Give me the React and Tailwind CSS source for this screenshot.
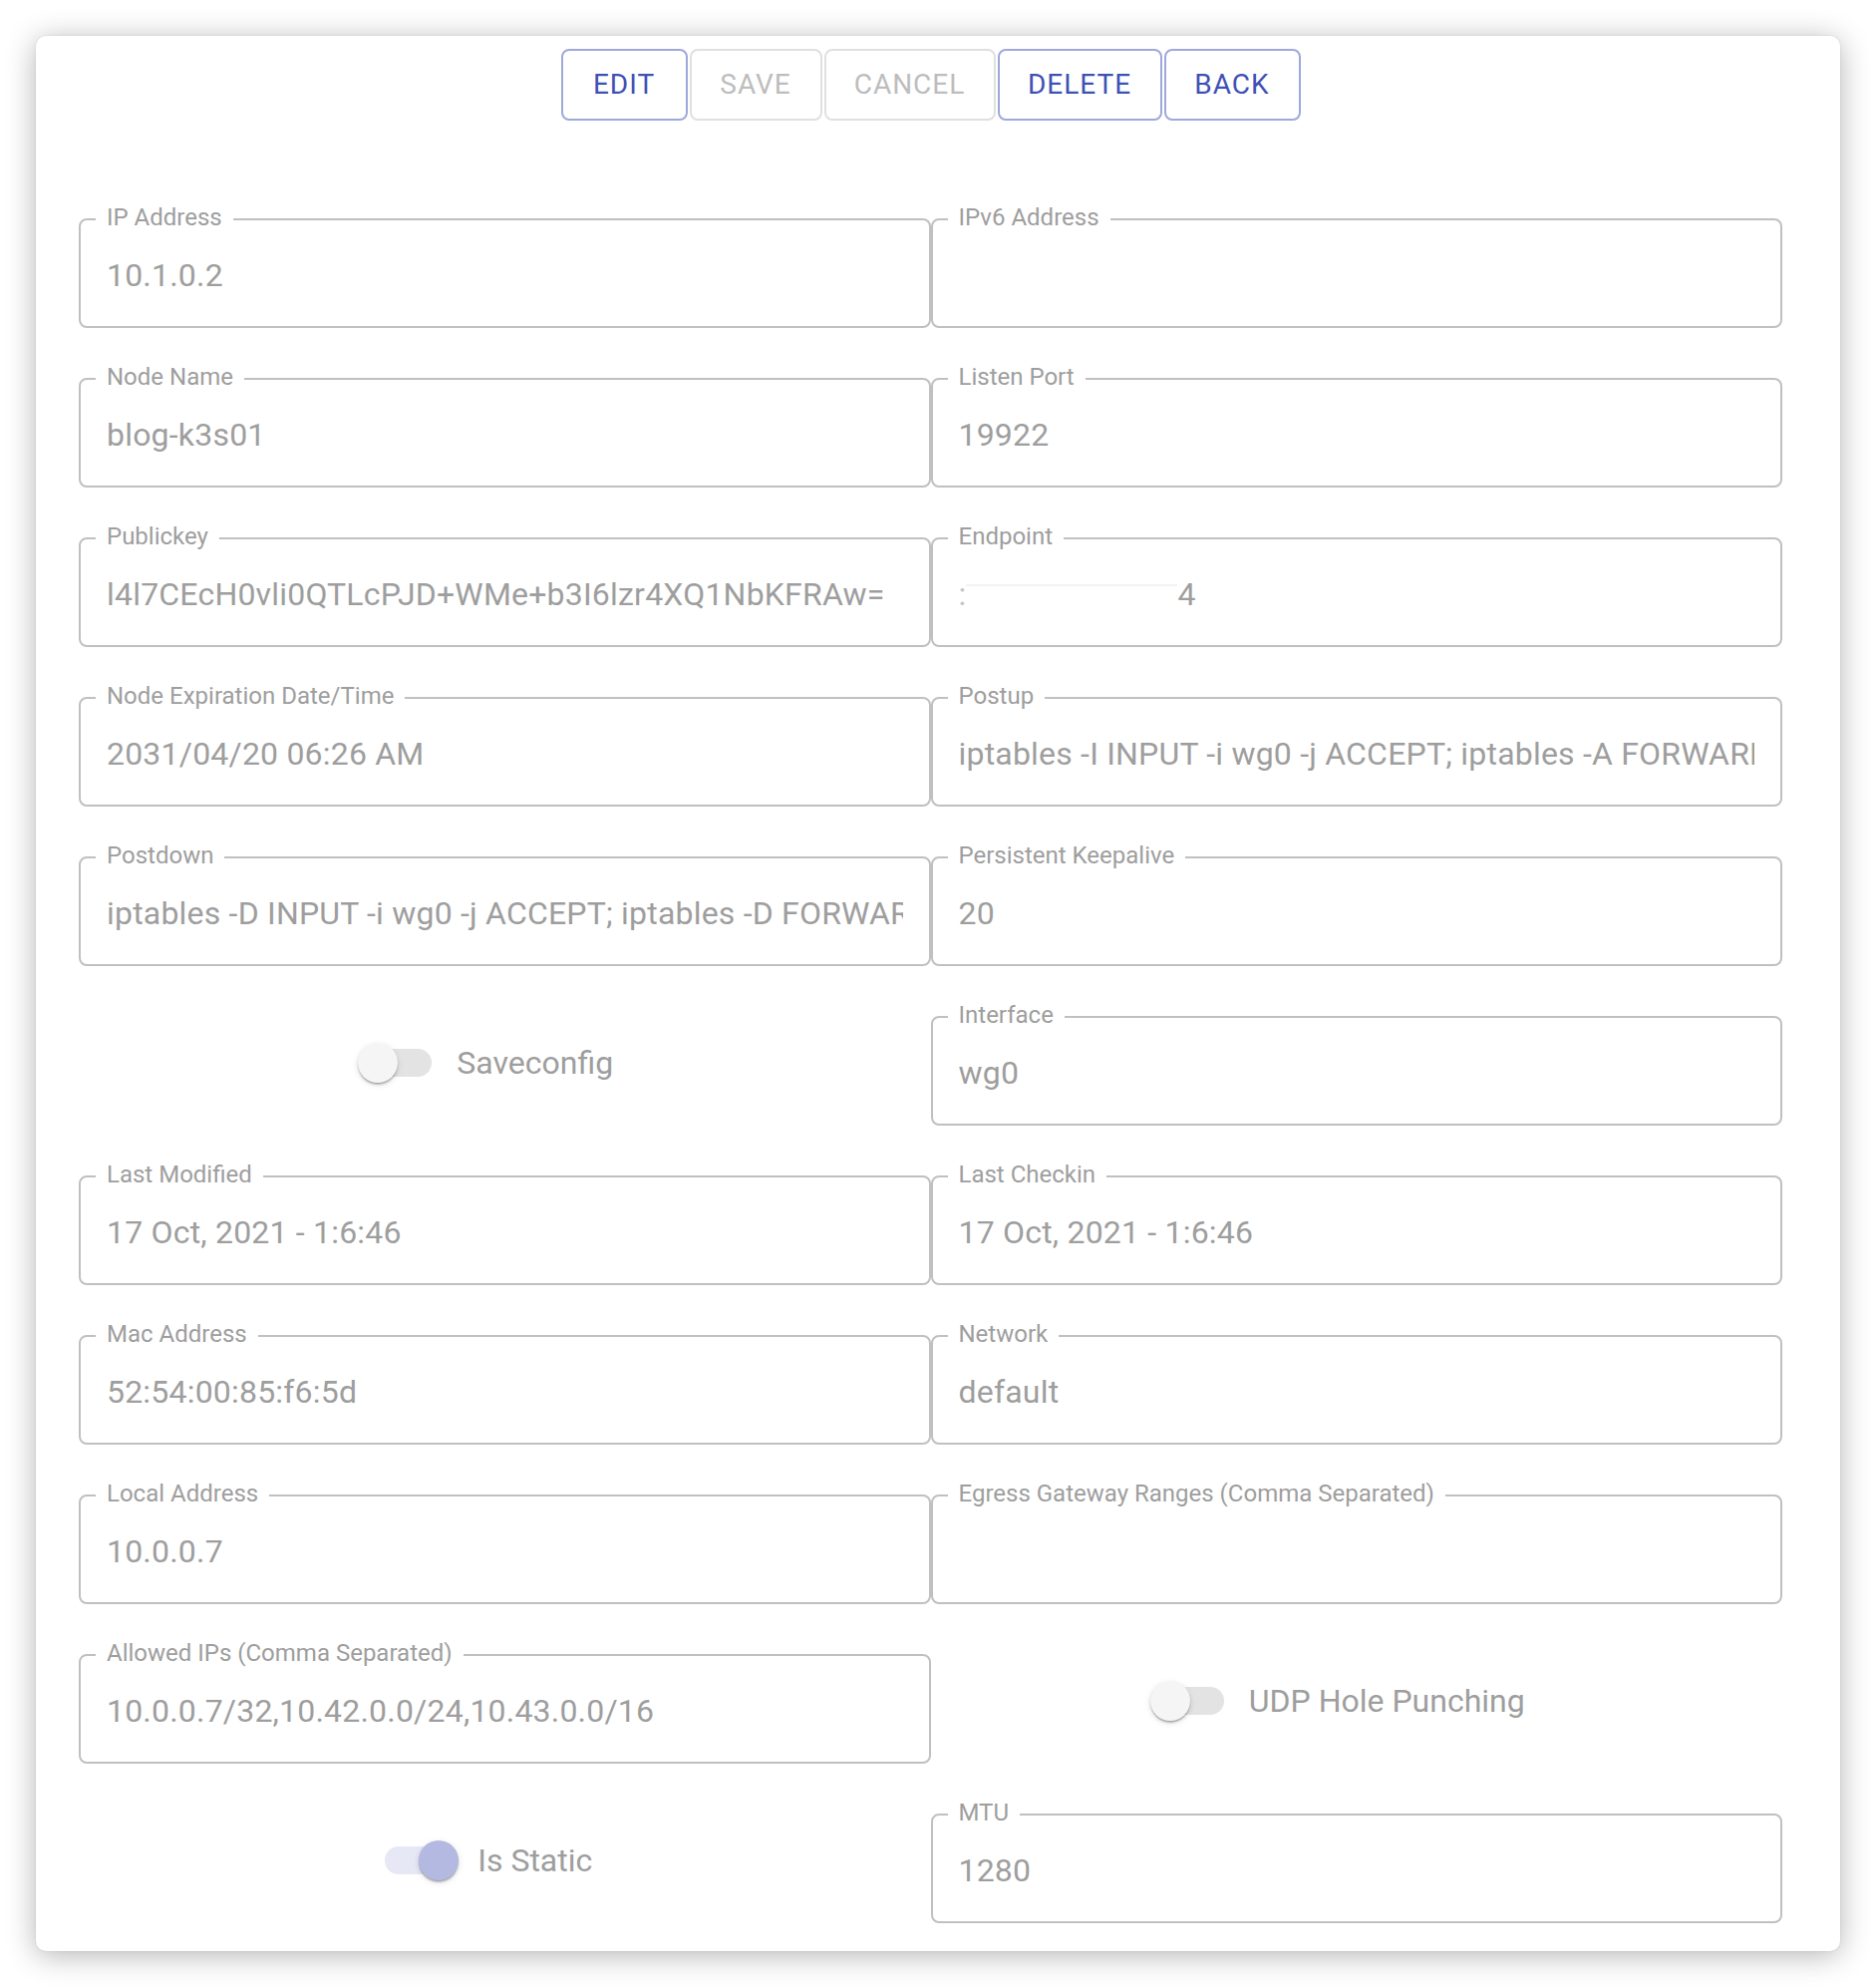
import React from "react";

const rows = [
  [{ label: "IP Address", value: "10.1.0.2" }, { label: "IPv6 Address", value: "" }],
  [{ label: "Node Name", value: "blog-k3s01" }, { label: "Listen Port", value: "19922" }],
  [
    { label: "Publickey", value: "l4l7CEcH0vli0QTLcPJD+WMe+b3I6lzr4XQ1NbKFRAw=" },
    { label: "Endpoint", endpoint: true },
  ],
  [
    { label: "Node Expiration Date/Time", value: "2031/04/20 06:26 AM" },
    {
      label: "Postup",
      value:
        "iptables -I INPUT -i wg0 -j ACCEPT; iptables -A FORWARD -i wg0 -j ACCEPT; iptables -t nat -A POSTROUTING -o eth0 -j MASQUERADE",
    },
  ],
  [
    {
      label: "Postdown",
      value:
        "iptables -D INPUT -i wg0 -j ACCEPT; iptables -D FORWARD -i wg0 -j ACCEPT; iptables -t nat -D POSTROUTING -o eth0 -j MASQUERADE",
    },
    { label: "Persistent Keepalive", value: "20" },
  ],
  [{ toggle: "Saveconfig", on: false }, { label: "Interface", value: "wg0" }],
  [
    { label: "Last Modified", value: "17 Oct, 2021 - 1:6:46" },
    { label: "Last Checkin", value: "17 Oct, 2021 - 1:6:46" },
  ],
  [{ label: "Mac Address", value: "52:54:00:85:f6:5d" }, { label: "Network", value: "default" }],
  [
    { label: "Local Address", value: "10.0.0.7" },
    { label: "Egress Gateway Ranges (Comma Separated)", value: "" },
  ],
  [
    { label: "Allowed IPs (Comma Separated)", value: "10.0.0.7/32,10.42.0.0/24,10.43.0.0/16" },
    { toggle: "UDP Hole Punching", on: false },
  ],
  [{ toggle: "Is Static", on: true }, { label: "MTU", value: "1280" }],
];

function Field({ label, value, endpoint }) {
  return (
    <div className="relative h-[110px] rounded-[8px] border-2 border-[#c0c0c0]">
      <span className="absolute left-[15px] top-[-17px] bg-white px-[11px] text-[24px] leading-[28px] text-[#9e9e9e] whitespace-nowrap">
        {label}
      </span>
      <div className="flex h-full items-center px-[26px] pt-[4px]">
        <div className="overflow-hidden whitespace-nowrap text-[32px] tracking-[0.2px] text-[#9e9e9e]">
          {endpoint ? (
            <span className="flex items-center">
              <span className="text-[#c4c4c4]">:</span>
              <span className="mb-[18px] inline-block h-[2px] w-[212px] bg-[#f3f3f3]" />
              <span>4</span>
            </span>
          ) : (
            value || "\u00a0"
          )}
        </div>
      </div>
    </div>
  );
}

function Toggle({ label, on }) {
  return (
    <div className="flex h-[110px] items-center justify-center pb-[16px] pr-[32px]">
      <div className={`relative h-[28px] w-[68px] rounded-full ${on ? "bg-[#e6e8f5]" : "bg-[#e3e3e3]"}`}>
        <span
          className={`absolute top-[-6px] h-[40px] w-[40px] rounded-full shadow-[0_2px_2px_-1px_rgba(0,0,0,0.25),0_2px_2px_0_rgba(0,0,0,0.14),0_2px_6px_0_rgba(0,0,0,0.12)] ${
            on ? "right-[-6px] bg-[#b4b9e1]" : "left-[-6px] bg-[#f5f5f5]"
          }`}
        />
      </div>
      <span className="ml-[25px] text-[32px] text-[#9e9e9e] whitespace-nowrap">{label}</span>
    </div>
  );
}

const buttons = [
  { text: "EDIT", w: "w-[127px]", active: true },
  { text: "SAVE", w: "w-[133px]", active: false },
  { text: "CANCEL", w: "w-[172px]", active: false },
  { text: "DELETE", w: "w-[165px]", active: true },
  { text: "BACK", w: "w-[137px]", active: true },
];

export default function App() {
  return (
    <div className="min-h-[1994px] bg-white p-[36px] font-['Roboto',sans-serif]">
      <div className="h-[1921px] w-[1810px] rounded-[10px] bg-white pl-[43px] pr-[58px] pt-[13px] shadow-[0_0_2px_rgba(0,0,0,0.12),0_4px_30px_rgba(0,0,0,0.3)]">
        <div className="flex justify-center gap-[2px]">
          {buttons.map((b) => (
            <button
              key={b.text}
              className={`flex h-[72px] items-center justify-center rounded-[8px] border-2 text-[28px] font-normal tracking-[1px] ${b.w} ${
                b.active ? "border-[#9fa8da] text-[#3f51b5]" : "border-[#e0e0e0] text-[#bdbdbd]"
              }`}
            >
              {b.text}
            </button>
          ))}
        </div>

        <div className="mt-[98px] grid grid-cols-2 gap-y-[50px]">
          {rows.map((row, i) =>
            row.map((cell, j) =>
              cell.toggle ? (
                <Toggle key={`${i}-${j}`} label={cell.toggle} on={cell.on} />
              ) : (
                <Field key={`${i}-${j}`} {...cell} />
              )
            )
          )}
        </div>
      </div>
    </div>
  );
}
